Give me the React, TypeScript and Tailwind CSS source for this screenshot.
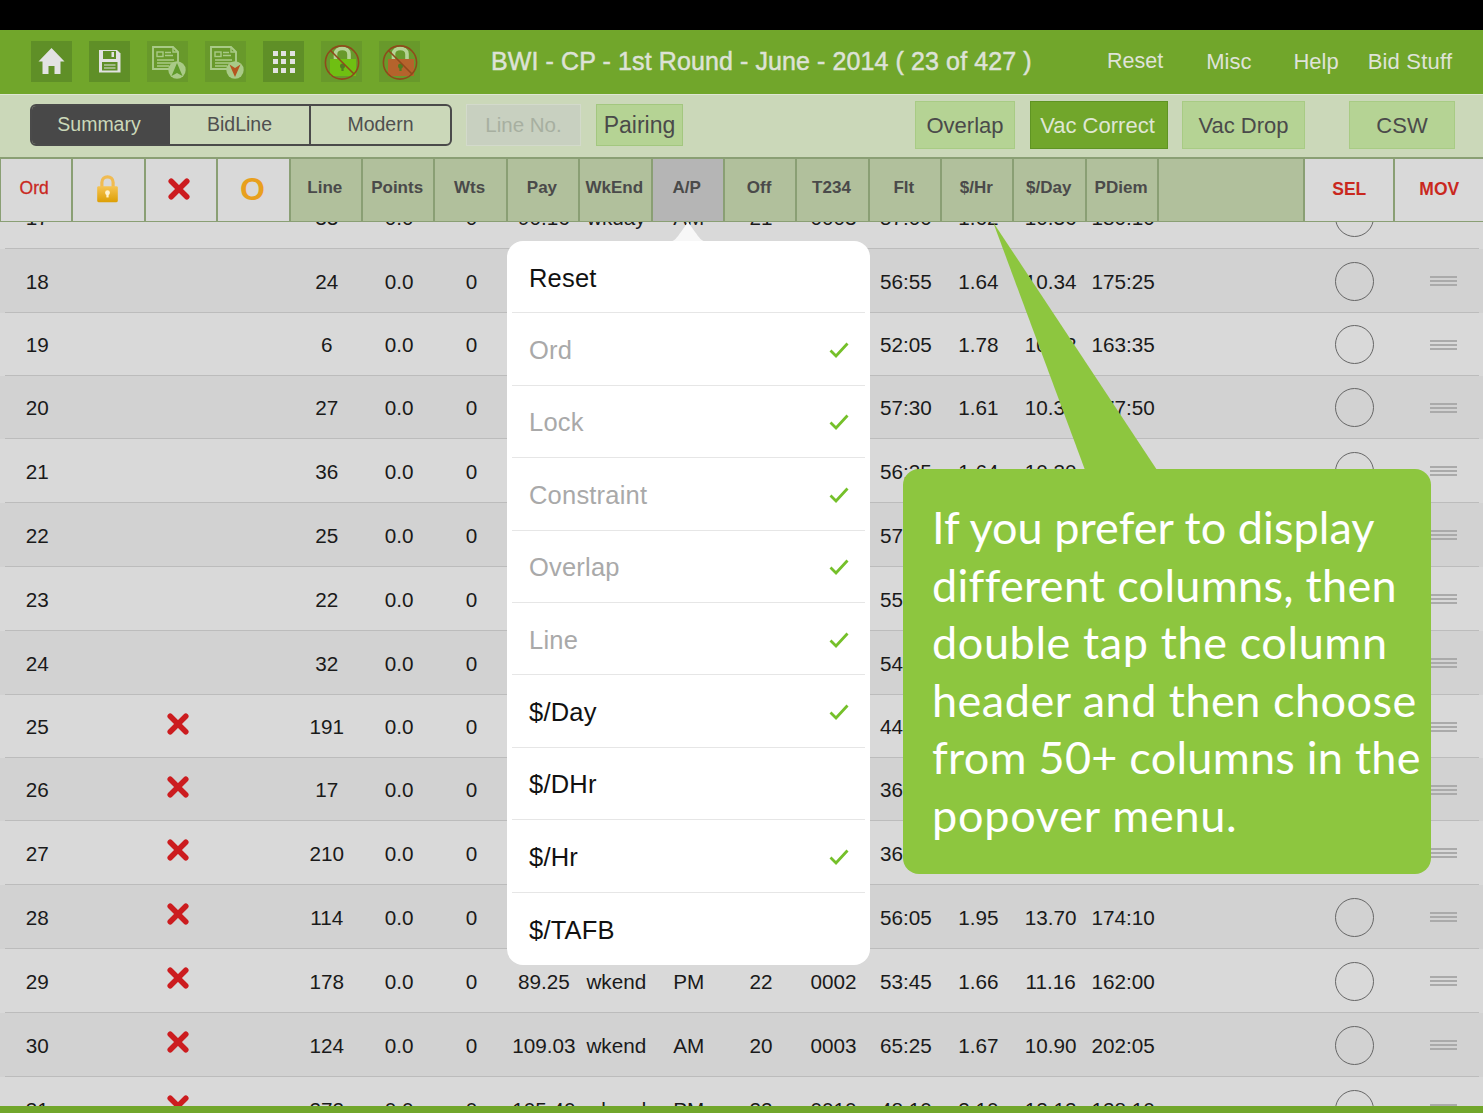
import React from 'react';

const GRID = 'grid grid-cols-[repeat(16,72.4px)_146px_90px_88px]';

type Row = { ord: number; h: 63 | 64; x?: boolean; cells: string[] };

const rows: Row[] = [
  { ord: 17, h: 64, cells: ['33', '0.0', '0', '90.16', 'wkday', 'AM', '21', '0003', '57:00', '1.62', '10.36', '180:10'] },
  { ord: 18, h: 64, cells: ['24', '0.0', '0', '92.10', 'wkday', 'PM', '21', '0002', '56:55', '1.64', '10.34', '175:25'] },
  { ord: 19, h: 63, cells: ['6', '0.0', '0', '92.80', 'wkday', 'PM', '21', '0002', '52:05', '1.78', '10.32', '163:35'] },
  { ord: 20, h: 63, cells: ['27', '0.0', '0', '92.60', 'wkday', 'AM', '21', '0003', '57:30', '1.61', '10.30', '177:50'] },
  { ord: 21, h: 64, cells: ['36', '0.0', '0', '92.20', 'wkday', 'PM', '21', '0002', '56:25', '1.64', '10.30', '172:40'] },
  { ord: 22, h: 64, cells: ['25', '0.0', '0', '92.00', 'wkday', 'PM', '21', '0002', '57:05', '1.61', '10.28', '170:10'] },
  { ord: 23, h: 64, cells: ['22', '0.0', '0', '91.90', 'wkday', 'AM', '21', '0003', '55:50', '1.65', '10.26', '168:30'] },
  { ord: 24, h: 64, cells: ['32', '0.0', '0', '91.70', 'wkday', 'PM', '21', '0002', '54:40', '1.68', '10.24', '167:15'] },
  { ord: 25, h: 63, x: true, cells: ['191', '0.0', '0', '91.50', 'wkend', 'PM', '22', '0002', '44:20', '2.06', '10.20', '160:05'] },
  { ord: 26, h: 63, x: true, cells: ['17', '0.0', '0', '91.30', 'wkend', 'AM', '22', '0003', '36:45', '2.48', '10.18', '158:50'] },
  { ord: 27, h: 64, x: true, cells: ['210', '0.0', '0', '91.10', 'wkend', 'PM', '22', '0002', '36:10', '2.52', '10.16', '155:20'] },
  { ord: 28, h: 64, x: true, cells: ['114', '0.0', '0', '109.50', 'wkend', 'AM', '20', '0003', '56:05', '1.95', '13.70', '174:10'] },
  { ord: 29, h: 64, x: true, cells: ['178', '0.0', '0', '89.25', 'wkend', 'PM', '22', '0002', '53:45', '1.66', '11.16', '162:00'] },
  { ord: 30, h: 64, x: true, cells: ['124', '0.0', '0', '109.03', 'wkend', 'AM', '20', '0003', '65:25', '1.67', '10.90', '202:05'] },
  { ord: 31, h: 64, x: true, cells: ['272', '0.0', '0', '105.40', 'wkend', 'PM', '22', '0010', '48:10', '2.10', '12.12', '128:10'] },
];

const headers = ['Line', 'Points', 'Wts', 'Pay', 'WkEnd', 'A/P', 'Off', 'T234', 'Flt', '$/Hr', '$/Day', 'PDiem'];

const menu = [
  { label: 'Reset', on: true },
  { label: 'Ord', check: true },
  { label: 'Lock', check: true },
  { label: 'Constraint', check: true },
  { label: 'Overlap', check: true },
  { label: 'Line', check: true },
  { label: '$/Day', on: true, check: true },
  { label: '$/DHr', on: true },
  { label: '$/Hr', on: true, check: true },
  { label: '$/TAFB', on: true },
];

// Lato runs a little narrower than the callout's face on some lines
const calloutLines = [
  { text: 'If you prefer to display', cls: 'tracking-[0.05px]' },
  { text: 'different columns, then', cls: 'tracking-[0.3px]' },
  { text: 'double tap the column', cls: 'tracking-[0.6px]' },
  { text: 'header and then choose', cls: 'tracking-[0.5px]' },
  { text: 'from 50+ columns in the', cls: 'tracking-[0.25px]' },
  { text: 'popover menu.', cls: 'tracking-[0.75px]' },
];

const RedX = ({ className }: { className: string }) => (
  <svg viewBox="0 0 24 24" className={className}>
    <path d="M3.5 3.5 L20.5 20.5 M20.5 3.5 L3.5 20.5" stroke="#cc1c1f" strokeWidth="6" strokeLinecap="round" />
  </svg>
);

const TopIcon = ({ dark, children }: { dark?: boolean; children: React.ReactNode }) => (
  <div className={`w-[41px] h-[41px] flex items-center justify-center ${dark ? 'bg-[#5f8f27]' : 'bg-[#68992b]'}`}>{children}</div>
);

const DocIcon = ({ down }: { down?: boolean }) => (
  <svg viewBox="0 0 41 41" className="w-[41px] h-[41px]">
    <path d="M6 6 H26 L31 11 V28 H6 Z" fill="none" stroke="#a9ca87" strokeWidth="1.9" />
    <path d="M26 6 V11 H31" fill="none" stroke="#a9ca87" strokeWidth="1.4" />
    <rect x="10" y="11" width="6" height="4.5" fill="none" stroke="#a9ca87" strokeWidth="1.4" />
    <path d="M18 11.5 H24 M18 14.5 H26 M10 19 H27 M10 22 H27 M10 25 H22" stroke="#a9ca87" strokeWidth="1.4" />
    <circle cx="30" cy="29" r="8.7" fill="#a9ca87" />
    {down ? (
      <path d="M24.5 23.5 L30 27 L35.5 23.5 L30 36 Z" fill="#b5551f" />
    ) : (
      <path d="M30 22 L35.5 35 L30 32 L24.5 35 Z" fill="#5f9a2a" />
    )}
  </svg>
);

const BanLock = ({ body }: { body: string }) => (
  <svg viewBox="0 0 41 41" className="w-[41px] h-[41px]">
    <path d="M14.5 19 V13 C14.5 5.5 28 5.5 28 13 V19" fill="none" stroke="#b5d394" strokeWidth="3.6" />
    <rect x="9" y="18" width="26" height="17" fill={body} />
    <circle cx="21.5" cy="25" r="2.5" fill="#4f7d20" />
    <rect x="20.4" y="25" width="2.2" height="5" fill="#4f7d20" />
    <circle cx="21" cy="21.5" r="16.6" fill="none" stroke="#8f4a1b" strokeWidth="1.6" />
    <path d="M9.5 9.5 L33 33" stroke="#8f4a1b" strokeWidth="1.6" />
  </svg>
);

const ToolButton = ({ label, active, className }: { label: string; active?: boolean; className: string }) => (
  <div
    className={`h-[48px] flex items-center justify-center text-[22px] border ${className} ${
      active ? 'bg-[#71a62b] border-[#5f9423] text-[#dfe6d4] pr-[3px]' : 'bg-[#b5d394] border-[#a8cb84] text-[#4a4a4a]'
    }`}
  >
    {label}
  </div>
);

const HeadCell = ({ children, tone, className = '' }: { children: React.ReactNode; tone: string; className?: string }) => (
  <div className={`flex items-center justify-center pb-[2px] border-r-2 border-[#8a9f74] ${tone} ${className}`}>{children}</div>
);

export default function App() {
  return (
    <div className="relative w-full h-screen overflow-hidden flex flex-col bg-[#d9d9d9] font-['Liberation_Sans',Arial,sans-serif]">
      <div className="h-[30px] shrink-0 bg-black" />

      {/* top bar */}
      <div className="h-[64px] shrink-0 bg-[#71a62b] flex items-center pl-[31px] pb-[1px] text-[#dfe3d8]">
        <div className="flex gap-[17px]">
          <TopIcon dark>
            <svg viewBox="0 0 41 41" className="w-[41px] h-[41px]">
              <path d="M20.5 7 L33.5 20.5 H29.5 V33 H23.5 V25 H17.5 V33 H11.5 V20.5 H7.5 Z" fill="#e2e2e2" />
            </svg>
          </TopIcon>
          <TopIcon dark>
            <svg viewBox="0 0 41 41" className="w-[41px] h-[41px]">
              <path d="M10 9 H28 L31.5 12.5 V31.5 H10 Z" fill="#e2e2e2" />
              <rect x="14" y="10" width="13" height="8" fill="#5f8f27" />
              <rect x="22.5" y="11" width="2.5" height="5" fill="#e2e2e2" />
              <rect x="13" y="21" width="15.5" height="8.5" fill="#5f8f27" />
              <path d="M15 24 H26.5 M15 27 H26.5" stroke="#e2e2e2" strokeWidth="1.2" />
            </svg>
          </TopIcon>
          <TopIcon>
            <DocIcon />
          </TopIcon>
          <TopIcon>
            <DocIcon down />
          </TopIcon>
          <TopIcon dark>
            <div className="grid grid-cols-3 gap-[3.5px]">
              {[1, 2, 3, 4, 5, 6, 7, 8, 9].map((n) => (
                <div key={n} className="w-[5px] h-[5px] bg-[#e2e2e2]" />
              ))}
            </div>
          </TopIcon>
          <TopIcon>
            <BanLock body="#6fbf12" />
          </TopIcon>
          <TopIcon>
            <BanLock body="#b5632c" />
          </TopIcon>
        </div>
        <div className="ml-[71px] w-[541px] text-[25px] tracking-[0.1px] whitespace-nowrap text-[#dde2d6] [-webkit-text-stroke:0.5px_#dde2d6]">
          BWI - CP - 1st Round - June - 2014 ( 23 of 427 )
        </div>
        <div className="ml-[75px] text-[21.5px]">Reset</div>
        <div className="ml-[43px] text-[22px]">Misc</div>
        <div className="ml-[42px] text-[22px]">Help</div>
        <div className="ml-[29px] text-[22px] tracking-[0.2px]">Bid Stuff</div>
      </div>

      {/* filter bar */}
      <div className="h-[63px] shrink-0 bg-[#cbd8b9] flex items-center pl-[30px] pb-[2px] border-t border-[#dfe6d4]">
        <div className="flex h-[42px] w-[422px] rounded-[6px] border-2 border-[#4a4a4a] overflow-hidden text-[19.5px] text-[#4f4f4f]">
          <div className="w-[138px] pr-[4px] bg-[#484848] text-[#cbd8b9] flex items-center justify-center">Summary</div>
          <div className="w-[141px] border-r-2 border-[#4a4a4a] flex items-center justify-center">BidLine</div>
          <div className="flex-1 flex items-center justify-center">Modern</div>
        </div>
        <div className="ml-[14px] w-[115px] h-[42px] bg-[#c8d0c0] border border-[#d3dacb] text-[#a7afa0] text-[20.5px] flex items-center justify-center">Line No.</div>
        <div className="ml-[15px] w-[87px] h-[42px] bg-[#b5d394] border border-[#a3c77f] text-[#4a4a4a] text-[23px] flex items-center justify-center">Pairing</div>
        <ToolButton label="Overlap" className="ml-[232px] w-[100px]" />
        <ToolButton label="Vac Correct" active className="ml-[15px] w-[138px]" />
        <ToolButton label="Vac Drop" className="ml-[14px] w-[123px]" />
        <ToolButton label="CSW" className="ml-[44px] w-[106px]" />
      </div>

      {/* column header */}
      <div className={`${GRID} h-[65px] shrink-0 pl-px bg-[#8a9f74] border-t-2 border-b border-[#8a9f74] relative z-10 font-bold text-[17px] text-[#4a4a4a]`}>
        <HeadCell tone="bg-[#d9d9d9]"><span className="text-[#c9281e] text-[17.5px] font-normal [-webkit-text-stroke:0.3px_#c9281e] mr-[4px] mb-[2px]">Ord</span></HeadCell>
        <HeadCell tone="bg-[#d9d9d9]" className="pr-[3px]">
          <svg viewBox="0 0 24 32" className="w-[23px] h-[30px]">
            <defs>
              <linearGradient id="gold" x1="0" y1="0" x2="0" y2="1">
                <stop offset="0" stopColor="#f6c453" />
                <stop offset="1" stopColor="#dd9f05" />
              </linearGradient>
            </defs>
            <path d="M6 14 V9 C6 1 18 1 18 9 V14" fill="none" stroke="#f0bb52" strokeWidth="3.4" />
            <rect x="1" y="13" width="22" height="17" rx="1.5" fill="url(#gold)" />
            <circle cx="12" cy="20" r="2.6" fill="#fff3d0" />
            <rect x="10.8" y="20" width="2.4" height="5" fill="#fff3d0" />
          </svg>
        </HeadCell>
        <HeadCell tone="bg-[#d9d9d9]" className="pr-[3px]"><RedX className="w-[22px] h-[22px]" /></HeadCell>
        <HeadCell tone="bg-[#d9d9d9]" className="pr-[2px]"><span className="text-[#e8a01e] text-[32px]">O</span></HeadCell>
        {headers.map((h) => (
          <HeadCell key={h} tone={h === 'A/P' ? 'bg-[#b5b5b5]' : 'bg-[#b1c09c]'} className="whitespace-nowrap">
            <span className="mb-[2px] mr-[2px]">{h}</span>
          </HeadCell>
        ))}
        <HeadCell tone="bg-[#b1c09c]">{''}</HeadCell>
        <HeadCell tone="bg-[#d9d9d9]"><span className="text-[#c9281e] text-[17.5px]">SEL</span></HeadCell>
        <div className="flex items-center justify-center pb-[2px] bg-[#d9d9d9]"><span className="text-[#c9281e] text-[17.5px]">MOV</span></div>
      </div>

      {/* table rows */}
      <div className="flex-1 overflow-hidden">
        <div className="-mt-[37px] text-[20.7px] text-[#1a1a1a]">
          {rows.map((r) => (
            <div
              key={r.ord}
              className={`flex flex-col ${r.h === 63 ? 'h-[63px]' : 'h-[64px]'} ${r.ord % 2 === 0 ? 'bg-[#d2d2d2]' : 'bg-[#d9d9d9]'}`}
            >
              <div className={`${GRID} flex-1 pl-px items-center pt-[2px]`}>
                <div className="text-center">{r.ord}</div>
                <div />
                <div className="flex justify-center pr-[8px] -mt-[7px]">{r.x && <RedX className="w-[22px] h-[22px]" />}</div>
                <div />
                {r.cells.map((c, i) => (
                  <div key={i} className="text-center whitespace-nowrap">{c}</div>
                ))}
                <div />
                <div className="flex justify-center pl-[8px] -mt-[1px]">
                  <div className="w-[39px] h-[39px] rounded-full border-[1.5px] border-[#666666]" />
                </div>
                <div className="flex flex-col gap-[2px] w-[27px] ml-[35px] -mt-[1px]">
                  <div className="h-[2px] bg-[#aaaaaa]" />
                  <div className="h-[2px] bg-[#aaaaaa]" />
                  <div className="h-[2px] bg-[#aaaaaa]" />
                </div>
              </div>
              <div className="h-px ml-[5px] mr-[4px] bg-[#bcbcbc]" />
            </div>
          ))}
        </div>
      </div>

      <div className="h-[7px] shrink-0 bg-[#71a62b] relative z-10" />

      {/* popover */}
      <div className="absolute left-[507px] top-[241px] w-[363px] z-20">
        <svg viewBox="0 0 42 20" className="absolute left-[160px] -top-[19px] w-[42px] h-[20px]">
          <path d="M0 20 C8 20 10 15 14 10 L21 0 L28 10 C32 15 34 20 42 20 Z" fill="#f7f7f7" />
        </svg>
        <div className="bg-white rounded-[16px] overflow-hidden px-[5px] relative">
          {menu.map((m, i) => (
            <div
              key={m.label}
              className={`h-[72.4px] flex items-center pl-[17px] pr-[16px] pt-[2px] text-[25.5px] tracking-[0.2px] ${i < menu.length - 1 ? 'border-b border-[#e6e6e6]' : ''} ${
                m.on ? 'text-[#111111]' : 'text-[#a9a9a9]'
              }`}
            >
              <span className="flex-1">{m.label}</span>
              {m.check && (
                <svg viewBox="0 0 20 16" className="w-[20px] h-[16px]">
                  <path d="M1.5 8.5 L7 14 L18.5 1.5" fill="none" stroke="#75c02a" strokeWidth="2.8" />
                </svg>
              )}
            </div>
          ))}
        </div>
      </div>

      {/* callout */}
      <svg viewBox="0 0 170 250" className="absolute left-[990px] top-[222px] w-[170px] h-[250px] z-30">
        <path d="M3 0 L95 248 H167 Z" fill="#8dc63f" />
      </svg>
      <div className="absolute left-[903px] top-[469px] w-[528px] h-[405px] rounded-[16px] bg-[#8dc63f] z-30 pl-[29px] pt-[30px] text-white text-[45px] leading-[57.6px] font-['Lato',sans-serif] whitespace-nowrap">
        {calloutLines.map((l) => (
          <div key={l.text} className={l.cls}>{l.text}</div>
        ))}
      </div>
    </div>
  );
}
